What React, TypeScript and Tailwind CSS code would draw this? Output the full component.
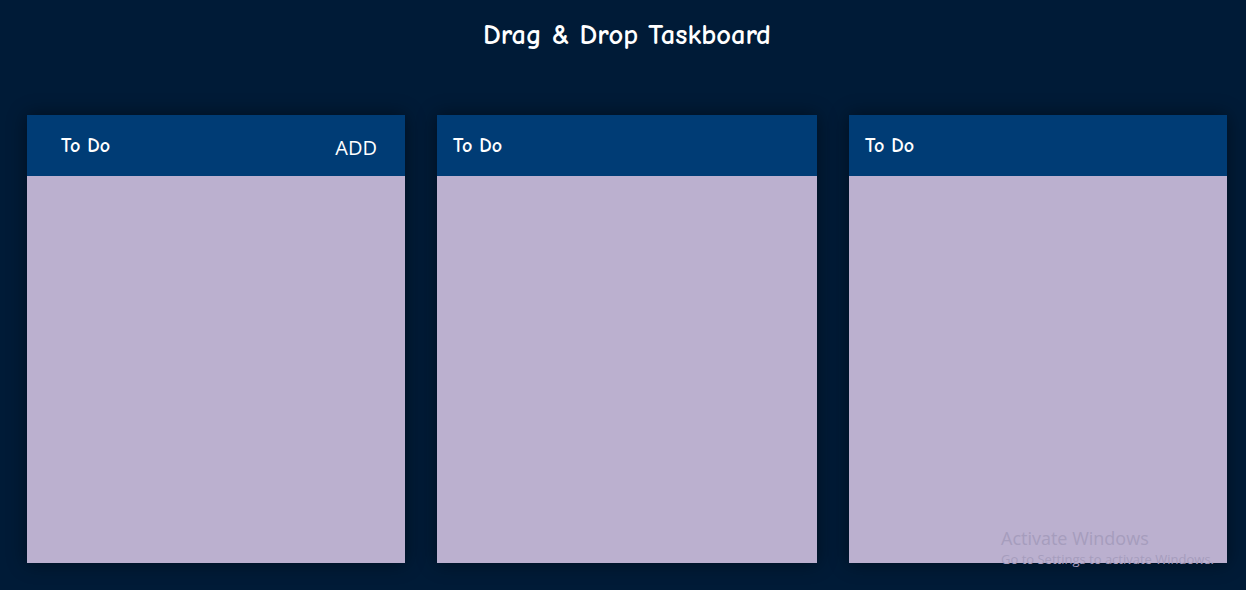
import React from "react";

const comic = { fontFamily: '"Comic Sans MS", "Comic Neue", cursive' } as React.CSSProperties;

function Column({ add, first, wide }: { add?: boolean; first?: boolean; wide?: boolean }) {
  return (
    <div className={`flex h-[448px] flex-col shadow-[0_0_18px_rgba(0,0,0,0.45)] ${wide ? "w-[380px]" : "w-[378px]"}`}>
      <div className={`flex h-[61px] items-center justify-between bg-[#003c75] ${first ? "pl-[34px] pr-[28px]" : "pl-[16px] pr-[28px]"}`}>
        <span className="text-[20px] font-bold text-white" style={comic}>
          To Do
        </span>
        {add && (
          <span className="mt-[4px] text-[20px] text-white [font-family:'Open_Sans',sans-serif]">ADD</span>
        )}
      </div>
      <div className="flex-1 bg-[#bbb0cf]" />
    </div>
  );
}

export default function App() {
  return (
    <div className="relative h-[590px] w-full overflow-hidden bg-[#001b37] [font-family:'Open_Sans',sans-serif]">
      <h1 className="pl-[8px] pt-[16px] text-center text-[28.5px] font-bold leading-[38px] text-white" style={comic}>
        Drag &amp; Drop Taskboard
      </h1>
      <div className="mt-[61px] flex gap-[32px] pl-[27px]">
        <Column add first />
        <Column wide />
        <Column />
      </div>
      <div className="pointer-events-none absolute left-[1001px] top-[529px] leading-none text-[#a69dbd]">
        <div className="text-[18px]">Activate Windows</div>
        <div className="mt-[6px] text-[13px]">Go to Settings to activate Windows.</div>
      </div>
    </div>
  );
}
